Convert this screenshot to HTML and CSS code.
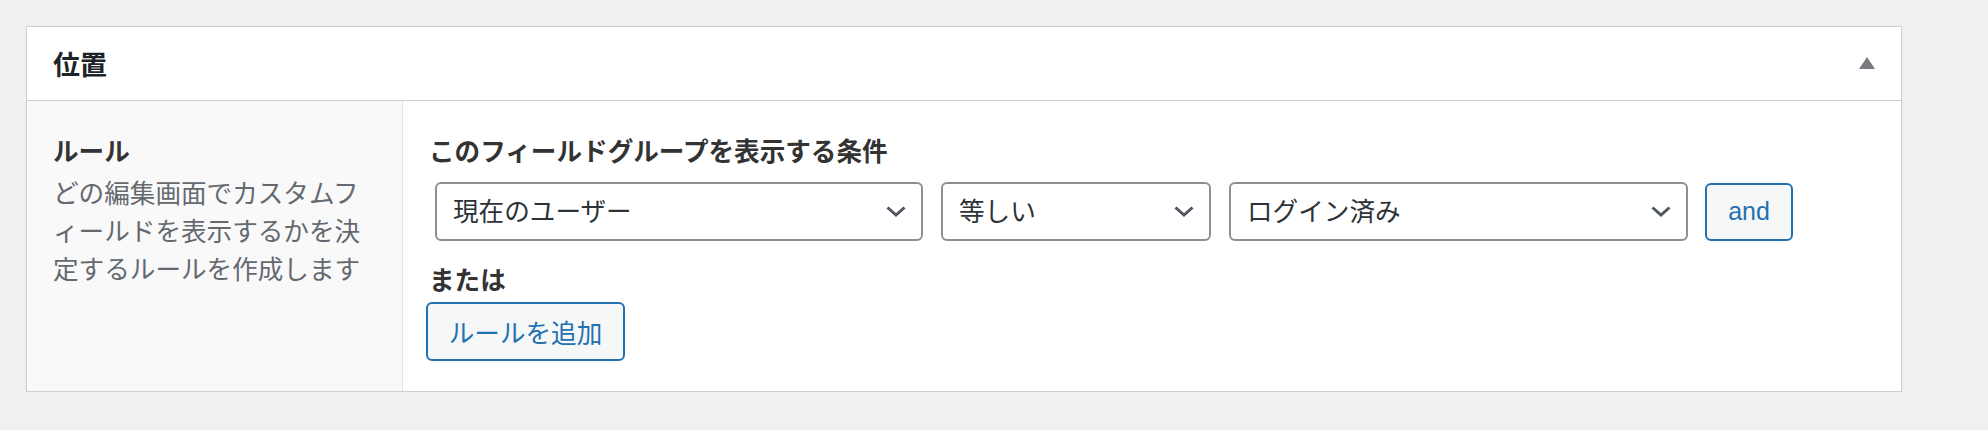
FILE: index.html
```html
<!DOCTYPE html>
<html lang="ja">
<head>
<meta charset="utf-8">
<title>位置</title>
<link rel="stylesheet" href="styles.css">
</head>
<body>
<div class="postbox">
  <div class="postbox-header">
    <h2 class="hndle">位置</h2>
    <button class="toggle" aria-label="閉じる">
      <svg width="16" height="12" viewBox="0 0 16 12"><polygon points="8,0 16,12 0,12" fill="#787c82"/></svg>
    </button>
  </div>
  <div class="postbox-body">
    <div class="label-col">
      <div class="label">ルール</div>
      <p class="description">どの編集画面でカスタムフィールドを表示するかを決定するルールを作成します</p>
    </div>
    <div class="input-col">
      <div class="group-title">このフィールドグループを表示する条件</div>
      <div class="rule-row">
        <div class="select w1"><span>現在のユーザー</span><svg class="chev" width="20" height="11" viewBox="0 0 20 11"><polyline points="1.5,1.5 10,9 18.5,1.5" fill="none" stroke="#50575e" stroke-width="3"/></svg></div>
        <div class="select w2"><span>等しい</span><svg class="chev" width="20" height="11" viewBox="0 0 20 11"><polyline points="1.5,1.5 10,9 18.5,1.5" fill="none" stroke="#50575e" stroke-width="3"/></svg></div>
        <div class="select w3"><span>ログイン済み</span><svg class="chev" width="20" height="11" viewBox="0 0 20 11"><polyline points="1.5,1.5 10,9 18.5,1.5" fill="none" stroke="#50575e" stroke-width="3"/></svg></div>
        <button class="btn btn-and">and</button>
      </div>
      <div class="or-title">または</div>
      <button class="btn btn-add">ルールを追加</button>
    </div>
  </div>
</div>
</body>
</html>
```
FILE: styles.css
```css
* { box-sizing: border-box; }
html, body {
  margin: 0;
  padding: 0;
  background: #f0f0f1;
  font-family: "Noto Sans CJK JP", "Noto Sans", sans-serif;
}
body { padding: 26px 0 0 26px; }
.postbox {
  width: 1876px;
  background: #fff;
  border: 1px solid #ccd0d4;
  box-shadow: 0 1px 2px rgba(0,0,0,0.05);
}
.postbox-header {
  height: 74px;
  border-bottom: 1px solid #ccd0d4;
  display: flex;
  align-items: center;
  justify-content: space-between;
  padding: 0 26px 0 26px;
}
.hndle {
  margin: 0;
  font-size: 27px;
  font-weight: 700;
  color: #1d2327;
  line-height: 1;
}
.toggle {
  border: 0;
  background: none;
  padding: 0;
  width: 16px;
  height: 12px;
  display: flex;
  margin-top: -2px;
}
.postbox-body {
  display: flex;
  height: 290px;
}
.label-col {
  width: 376px;
  background: #f9f9f9;
  border-right: 1px solid #e1e1e1;
  padding: 30px 26px 0 26px;
}
.label {
  font-size: 25.6px;
  line-height: 38px;
  font-weight: 700;
  color: #333;
}
.description {
  margin: 4px 0 0 0;
  font-size: 25.6px;
  line-height: 38px;
  color: #646970;
}
.input-col {
  flex: 1;
  padding: 30px 26px 0 26px;
}
.group-title, .or-title {
  font-size: 25.6px;
  line-height: 38px;
  font-weight: 700;
  color: #333;
}
.rule-row {
  display: flex;
  align-items: center;
  margin: 13px 0 19px 6px;
}
.select {
  height: 59px;
  border: 2px solid #8c8f94;
  border-radius: 6px;
  background: #fff;
  display: flex;
  align-items: center;
  justify-content: space-between;
  padding: 0 15px 0 16px;
  font-size: 25.6px;
  color: #2c3338;
  margin-right: 18px;
}
.select span { line-height: 1; margin-top: -3px; }
.chev { display: block; }
.w1 { width: 488px; }
.w2 { width: 270px; }
.w3 { width: 459px; margin-right: 17px; }
.btn {
  border: 2px solid #2271b1;
  border-radius: 6px;
  background: #f6f7f7;
  color: #2271b1;
  font-size: 25.6px;
  padding: 0;
  display: flex;
  align-items: center;
  justify-content: center;
  height: 58px;
  cursor: pointer;
}
.btn-and {
  width: 88px;
  font-family: "Liberation Sans", "Noto Sans", sans-serif;
  font-size: 25px;
}
.btn-add {
  width: 199px;
  height: 59px;
  margin: 4px 0 0 -3px;
  font-family: "Noto Sans CJK JP", sans-serif;
}
```
